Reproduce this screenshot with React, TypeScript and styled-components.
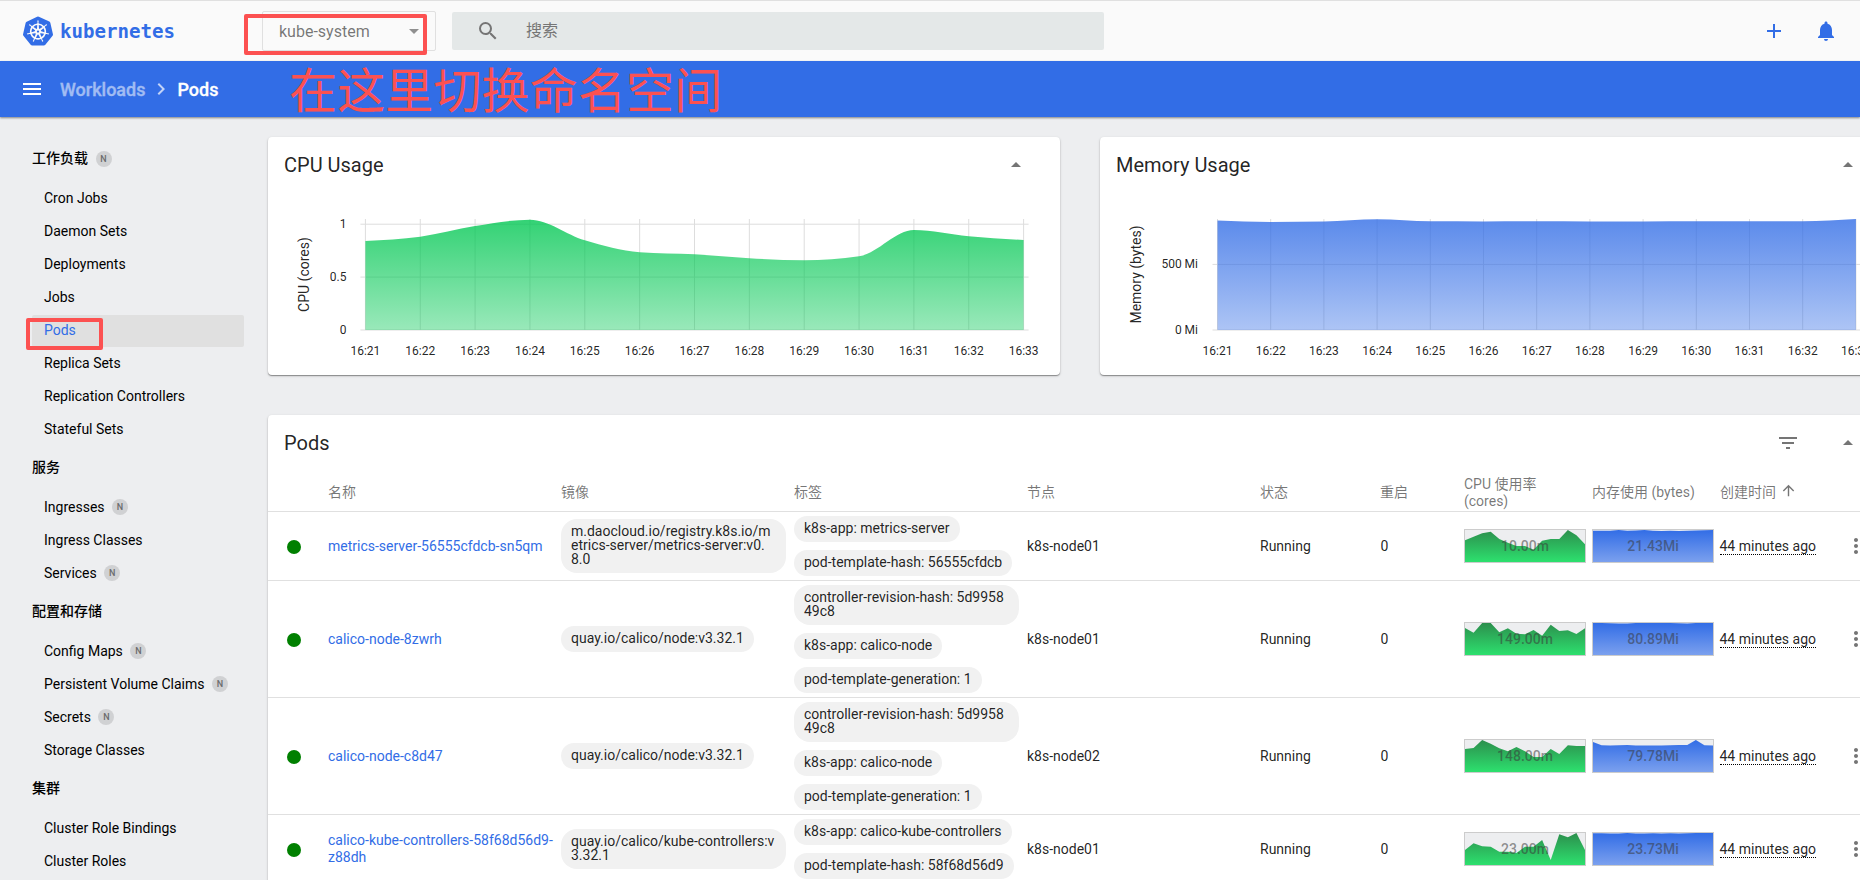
import React from "react";
import styled, { createGlobalStyle, css } from "styled-components";
import { SiKubernetes } from "react-icons/si";
import {
  MdAdd,
  MdArrowDropDown,
  MdArrowDropUp,
  MdArrowUpward,
  MdChevronRight,
  MdFilterList,
  MdMenu,
  MdMoreVert,
  MdNotifications,
  MdSearch,
} from "react-icons/md";

const BLUE = "#326de6";
const GREEN = "#00c752";
const RED = "#fc5151";
const FONT = `Roboto, "Noto Sans CJK SC", sans-serif`;

const GlobalStyle = createGlobalStyle`
  * { box-sizing: border-box; }
  html, body { margin: 0; padding: 0; }
  body {
    background: #edeef0;
    color: rgba(0, 0, 0, 0.87);
    font-family: ${FONT};
    font-size: 14px;
    overflow: hidden;
  }
`;

const Page = styled.div`
  position: relative;
  width: 1860px;
  height: 880px;
  overflow: hidden;
  display: flex;
  flex-direction: column;
`;

/* ---------- top bar ---------- */

const TopBar = styled.header`
  flex: none;
  height: 61px;
  display: flex;
  align-items: center;
  padding: 0 22px 0 23px;
  border-top: 1px solid #e0e0e0;
  background: #fafafa;
`;

const Brand = styled.a`
  display: flex;
  align-items: center;
  width: 239px;
  color: ${BLUE};
`;

const BrandName = styled.svg`
  width: 124px;
  height: 30px;
  margin-left: 7px;
  fill: ${BLUE};
  font-family: "DejaVu Sans Mono", monospace;
  font-weight: 700;
  font-size: 20px;
`;

const NamespaceSelect = styled.div`
  display: flex;
  align-items: center;
  justify-content: space-between;
  width: 174px;
  height: 40px;
  padding: 0 9px 0 16px;
  border: 1px solid #e0e0e0;
  border-radius: 2px;
  font-size: 16px;
  color: rgba(0, 0, 0, 0.54);
  > svg {
    color: #8f8f8f;
  }
`;

const SearchBox = styled.div`
  display: flex;
  align-items: center;
  width: 652px;
  height: 38px;
  margin-left: 16px;
  padding-left: 24px;
  border-radius: 2px;
  background: #e4e8e8;
  font-size: 16px;
  color: #757575;
`;

const SearchHint = styled.span`
  margin-left: 26px;
  padding-bottom: 4px;
`;

const TopActions = styled.div`
  display: flex;
  gap: 28px;
  margin-left: auto;
  color: ${BLUE};
`;

/* ---------- breadcrumb bar ---------- */

const CrumbBar = styled.nav`
  position: relative;
  z-index: 1;
  flex: none;
  height: 56px;
  display: flex;
  align-items: center;
  padding-left: 20px;
  background: ${BLUE};
  color: #fff;
  font-size: 18px;
  font-weight: 500;
  box-shadow: 0 1px 2px rgba(0, 0, 0, 0.45);
`;

const Crumb = styled.span<{ $parent?: boolean }>`
  opacity: ${(p) => (p.$parent ? 0.54 : 1)};
  margin-left: ${(p) => (p.$parent ? 16 : 4)}px;
  -webkit-text-stroke: 0.3px currentColor;
`;

const CrumbArrow = styled(MdChevronRight)`
  margin-left: 4px;
  opacity: 0.7;
`;

/* ---------- side navigation ---------- */

const Body = styled.div`
  flex: 1;
  min-height: 0;
  display: flex;
`;

const SideNav = styled.aside`
  flex: none;
  width: 268px;
  padding: 21px 24px 0 32px;
  color: #000;
`;

const NavTitle = styled.div`
  display: flex;
  align-items: center;
  height: 45px;
  padding-bottom: 4px;
  font-weight: 500;
`;

const NavTitleText = styled.span`
  padding-bottom: 3px;
`;

const NavItem = styled.div<{ $active?: boolean }>`
  display: flex;
  align-items: center;
  height: 32px;
  margin-bottom: 1px;
  padding: 0 0 2px 12px;
  border-radius: 2px;
  ${(p) =>
    p.$active &&
    css`
      background: #e0e0e0;
      color: ${BLUE};
    `}
`;

const NamespacedBadge = styled.span`
  display: flex;
  align-items: center;
  justify-content: center;
  width: 16px;
  height: 16px;
  margin-left: 7.5px;
  border-radius: 50%;
  background: #d0d1d3;
  color: #6a6b6d;
  font-size: 9px;
  font-weight: 500;
`;

/* ---------- cards ---------- */

const Main = styled.main`
  flex: none;
  width: 1624px;
  padding-top: 20px;
`;

const ChartRow = styled.div`
  display: flex;
  gap: 40px;
  margin-bottom: 40px;
`;

const Card = styled.section<{ $chart?: boolean }>`
  border-radius: 4px;
  background: #fff;
  box-shadow: 0 1px 1px rgba(0, 0, 0, 0.35), 0 1px 3px rgba(0, 0, 0, 0.16);
  ${(p) =>
    p.$chart
      ? css`
          width: 792px;
          height: 238px;
        `
      : css`
          height: 520px;
        `}
`;

const CardHead = styled.div`
  display: flex;
  align-items: center;
  height: 56px;
  padding: 0 32px 0 16px;
  font-size: 20px;
`;

const HeadIcons = styled.span`
  display: flex;
  gap: 36px;
  margin-left: auto;
  color: #757575;
`;

const Plot = styled.svg`
  display: block;
  font-family: ${FONT};
  font-size: 12px;
  fill: rgba(0, 0, 0, 0.87);
`;

/* ---------- table ---------- */

const Row = styled.div<{ $head?: boolean }>`
  display: grid;
  grid-template-columns: 60px 233px 233px 233px 233px 120px 84px 128px 128px 1fr;
  align-items: center;
  border-bottom: 1px solid #e0e0e0;
  ${(p) =>
    p.$head &&
    css`
      height: 41px;
      padding-top: 2px;
      color: rgba(0, 0, 0, 0.54);
      line-height: 17px;
    `}
`;

const Cell = styled.div`
  padding-right: 8px;
  line-height: 17px;
`;

const CountCell = styled(Cell)`
  padding-left: 0.6px;
`;

const HeadCell = styled.div<{ $narrow?: boolean }>`
  display: flex;
  align-items: center;
  gap: 4px;
  width: ${(p) => (p.$narrow ? "90px" : "auto")};
  padding-top: ${(p) => (p.$narrow ? 2 : 0)}px;
  white-space: ${(p) => (p.$narrow ? "normal" : "nowrap")};
  > svg {
    margin-bottom: 3px;
  }
`;

const ChipCell = styled(Cell)`
  display: flex;
  flex-direction: column;
  align-items: flex-start;
  gap: 8px;
  padding-top: 4px;
  padding-bottom: 4px;
`;

const Chip = styled.span`
  padding: 5px 10px 7px;
  border-radius: 16px;
  background: #f1f1f1;
  line-height: 14px;
  word-break: break-all;
`;

const PodLink = styled.a`
  color: ${BLUE};
`;

const StatusDot = styled.span`
  width: 14px;
  height: 14px;
  margin: 1px 0 0 19px;
  border-radius: 50%;
  background: #008000;
`;

const SparkBox = styled.div`
  display: grid;
  width: 122px;
  height: 34px;
  border: 1px solid #cccccc;
  background: #edeef0;
  > * {
    grid-area: 1 / 1;
  }
`;

const SparkValue = styled.span`
  place-self: center;
  z-index: 1;
  font-weight: 500;
  color: rgba(56, 56, 56, 0.54);
`;

const LastCell = styled.div`
  display: grid;
  grid-template-columns: 0 1fr;
  align-items: center;
  white-space: nowrap;
`;

const Age = styled.span`
  display: inline-block;
  line-height: 15px;
  margin-left: -0.5px;
  border-bottom: 1px dotted #000;
`;

const MoreCell = styled.div`
  padding-left: 124px;
  height: 24px;
  color: #757575;
`;

const GradientDefs = styled.svg`
  flex: none;
  width: 1px;
  height: 0;
`;

/* ---------- annotations on top of the page ---------- */

const Marker = styled.div<{ $x: number; $y: number; $w: number; $h: number }>`
  position: absolute;
  z-index: 5;
  left: ${(p) => p.$x}px;
  top: ${(p) => p.$y}px;
  width: ${(p) => p.$w}px;
  height: ${(p) => p.$h}px;
  border: 4px solid ${RED};
  border-radius: 2px;
`;

const Note = styled.div`
  position: absolute;
  z-index: 5;
  left: 289px;
  top: 58px;
  color: ${RED};
  font: 400 48px/58px "Noto Sans CJK SC", sans-serif;
  letter-spacing: 0.15px;
  white-space: nowrap;
`;

/* ---------- charts ---------- */

type Point = [number, number];

/** Monotone cubic interpolation along x. */
function smoothLine(pts: Point[]): string {
  const n = pts.length;
  const slope = (i: number) => (pts[i + 1][1] - pts[i][1]) / (pts[i + 1][0] - pts[i][0]);
  const m: number[] = new Array(n).fill(0);
  for (let i = 1; i < n - 1; i++) {
    const a = slope(i - 1);
    const b = slope(i);
    m[i] = (Math.sign(a) + Math.sign(b)) * Math.min(Math.abs(a), Math.abs(b), Math.abs(a + b) / 4);
  }
  m[0] = (3 * slope(0) - m[1]) / 2;
  m[n - 1] = (3 * slope(n - 2) - m[n - 2]) / 2;
  let d = `M${pts[0][0]},${pts[0][1]}`;
  for (let i = 1; i < n; i++) {
    const [x0, y0] = pts[i - 1];
    const [x1, y1] = pts[i];
    const k = (x1 - x0) / 3;
    d += `C${x0 + k},${y0 + k * m[i - 1]} ${x1 - k},${y1 - k * m[i]} ${x1},${y1}`;
  }
  return d;
}

interface UsageProps {
  id: string;
  title: string;
  axis: string;
  axisX: number;
  color: string;
  left: number;
  step: number;
  tickX: number;
  ticks: { label: string; y: number }[];
  tops: number[];
}

function UsageCard({ id, title, axis, axisX, color, left, step, tickX, ticks, tops }: UsageProps) {
  const base = 137;
  const pts: Point[] = tops.map((y, i) => [left + i * step, y]);
  const right = left + 12 * step;
  return (
    <Card $chart>
      <CardHead>
        {title}
        <HeadIcons>
          <MdArrowDropUp size={24} />
        </HeadIcons>
      </CardHead>
      <Plot width={792} height={182}>
        <defs>
          <linearGradient id={id} x1="0" y1="0" x2="0" y2="1">
            <stop offset="0" stopColor={color} stopOpacity="0.8" />
            <stop offset="1" stopColor={color} stopOpacity="0.4" />
          </linearGradient>
        </defs>
        {pts.map(([x], i) => (
          <g key={i}>
            <line x1={x} x2={x} y1={26} y2={base} stroke="#ddd" />
            <text x={x} y={162} textAnchor="middle">{`16:${21 + i}`}</text>
          </g>
        ))}
        {ticks.map((t) => (
          <g key={t.label}>
            <line x1={left - 5} x2={right + 5} y1={t.y} y2={t.y} stroke="#ddd" />
            <text x={tickX} y={t.y + 4} textAnchor="end">
              {t.label}
            </text>
          </g>
        ))}
        <path d={`${smoothLine(pts)}V${base}H${left}Z`} fill={`url(#${id})`} />
        <text fontSize={14} textAnchor="middle" transform={`translate(${axisX},81.5) rotate(-90)`}>
          {axis}
        </text>
      </Plot>
    </Card>
  );
}

function Spark({ values, text, kind }: { values: number[]; text: string; kind: "cpu" | "mem" }) {
  const line = values.map((v, i) => `${((i * 120) / (values.length - 1)).toFixed(2)},${v}`).join(" ");
  return (
    <SparkBox>
      <svg width={120} height={32}>
        <polygon points={`0,32 ${line} 120,32`} fill={`url(#spark-${kind})`} />
      </svg>
      <SparkValue>{text}</SparkValue>
    </SparkBox>
  );
}

/** Shared fills of the small table charts. */
function SparkGradients() {
  return (
    <GradientDefs>
      <defs>
        <linearGradient id="spark-cpu" gradientUnits="userSpaceOnUse" x1="0" y1="0" x2="0" y2="32">
          <stop offset="0" stopColor="#2c8f4d" />
          <stop offset="1" stopColor="#2de06e" />
        </linearGradient>
        <linearGradient id="spark-mem" gradientUnits="userSpaceOnUse" x1="0" y1="0" x2="0" y2="32">
          <stop offset="0" stopColor="#326de6" />
          <stop offset="1" stopColor="#7ba0ee" />
        </linearGradient>
      </defs>
    </GradientDefs>
  );
}

/* ---------- data ---------- */

const nav = [
  {
    title: "工作负载",
    badge: true,
    items: ["Cron Jobs", "Daemon Sets", "Deployments", "Jobs", "Pods", "Replica Sets", "Replication Controllers", "Stateful Sets"],
  },
  { title: "服务", items: ["Ingresses", "Ingress Classes", "Services"] },
  { title: "配置和存储", items: ["Config Maps", "Persistent Volume Claims", "Secrets", "Storage Classes"] },
  { title: "集群", items: ["Cluster Role Bindings", "Cluster Roles"] },
];

const namespaced = new Set(["Ingresses", "Services", "Config Maps", "Persistent Volume Claims", "Secrets"]);

const pods = [
  {
    name: "metrics-server-56555cfdcb-sn5qm",
    image: "m.daocloud.io/registry.k8s.io/metrics-server/metrics-server:v0.8.0",
    labels: ["k8s-app: metrics-server", "pod-template-hash: 56555cfdcb"],
    node: "k8s-node01",
    cpu: "10.00m",
    cpuLine: [10.3, 6.7, 3.3, 1.7, 9, 12.7, 16, 16, 19.7, 10.7, 9, 9, 0, 5.3, 14.3],
    mem: "21.43Mi",
    memLine: [0.8, 0.7, 0.8, 0, 0.8, 0.5, 0, 0.8, 1, 0.7, 0.9, 0.7, 0.6, 0.2, 0.1],
  },
  {
    name: "calico-node-8zwrh",
    image: "quay.io/calico/node:v3.32.1",
    labels: ["controller-revision-hash: 5d995849c8", "k8s-app: calico-node", "pod-template-generation: 1"],
    node: "k8s-node01",
    cpu: "149.00m",
    cpuLine: [5, 9.7, 0, 0, 9.3, 5.3, 10.7, 11.3, 7, 12.7, 1.7, 8, 7.3, 11, 5.3],
    mem: "80.89Mi",
    memLine: [0, 0, 0.3, 0.6, 0.4, 0, 0, 0, 0, 0, 0.3, 0.5, 0.1, 0, 0],
  },
  {
    name: "calico-node-c8d47",
    image: "quay.io/calico/node:v3.32.1",
    labels: ["controller-revision-hash: 5d995849c8", "k8s-app: calico-node", "pod-template-generation: 1"],
    node: "k8s-node02",
    cpu: "148.00m",
    cpuLine: [9, 8, 0, 3.7, 8.3, 11.3, 7, 11.3, 17, 17, 9, 14, 5.3, 6, 6],
    mem: "79.78Mi",
    memLine: [2, 5.3, 5.4, 5.3, 5.1, 5.4, 5.4, 5.4, 5.4, 5.2, 5, 5, 0, 5.3, 5.4],
  },
  {
    name: "calico-kube-controllers-58f68d56d9-z88dh",
    image: "quay.io/calico/kube-controllers:v3.32.1",
    labels: ["k8s-app: calico-kube-controllers", "pod-template-hash: 58f68d56d9"],
    node: "k8s-node01",
    cpu: "23.00m",
    cpuLine: [17, 10.3, 13.3, 13.7, 18.7, 18.7, 20, 13.7, 13.7, 7, 27, 1.3, 4.3, 0, 17],
    mem: "23.73Mi",
    memLine: [0.3, 0.3, 0.6, 0.6, 0, 0.4, 0.4, 0.3, 0.6, 0.3, 0.6, 0.2, 0.1, 0, 0],
  },
];

export default function App() {
  return (
    <Page>
      <GlobalStyle />
      <TopBar>
        <Brand>
          <SiKubernetes size={30} />
          <BrandName>
            <text x="0" y="22" textLength="115" lengthAdjust="spacingAndGlyphs">
              kubernetes
            </text>
          </BrandName>
        </Brand>
        <NamespaceSelect>
          kube-system
          <MdArrowDropDown size={24} />
        </NamespaceSelect>
        <SearchBox>
          <MdSearch size={24} />
          <SearchHint>搜索</SearchHint>
        </SearchBox>
        <TopActions>
          <MdAdd size={24} />
          <MdNotifications size={24} />
        </TopActions>
      </TopBar>

      <CrumbBar>
        <MdMenu size={24} />
        <Crumb $parent>Workloads</Crumb>
        <CrumbArrow size={24} />
        <Crumb>Pods</Crumb>
      </CrumbBar>

      <Body>
        <SideNav>
          {nav.map((group) => (
            <React.Fragment key={group.title}>
              <NavTitle>
                <NavTitleText>{group.title}</NavTitleText>
                {group.badge && <NamespacedBadge>N</NamespacedBadge>}
              </NavTitle>
              {group.items.map((item) => (
                <NavItem key={item} $active={item === "Pods"}>
                  {item}
                  {namespaced.has(item) && <NamespacedBadge>N</NamespacedBadge>}
                </NavItem>
              ))}
            </React.Fragment>
          ))}
        </SideNav>

        <Main>
          <ChartRow>
            <UsageCard
              id="cpu"
              title="CPU Usage"
              axis="CPU (cores)"
              axisX={41}
              color={GREEN}
              left={97.4}
              step={54.85}
              tickX={78.5}
              ticks={[
                { label: "1", y: 31.2 },
                { label: "0.5", y: 84.1 },
                { label: "0", y: 137 },
              ]}
              tops={[48, 43.7, 33, 26.7, 47.3, 59.3, 61.3, 65.3, 67.2, 63.3, 37, 43.3, 47]}
            />
            <UsageCard
              id="memory"
              title="Memory Usage"
              axis="Memory (bytes)"
              axisX={41}
              color={BLUE}
              left={117.5}
              step={53.2}
              tickX={98}
              ticks={[
                { label: "500 Mi", y: 71.4 },
                { label: "0 Mi", y: 137 },
              ]}
              tops={[27.5, 28.9, 28.5, 26.2, 28.3, 28.4, 28.2, 28.4, 28.4, 28.3, 28.3, 28.2, 26]}
            />
          </ChartRow>

          <Card>
            <CardHead>
              Pods
              <HeadIcons>
                <MdFilterList size={24} />
                <MdArrowDropUp size={24} />
              </HeadIcons>
            </CardHead>
            <Row $head>
              <span />
              <HeadCell>名称</HeadCell>
              <HeadCell>镜像</HeadCell>
              <HeadCell>标签</HeadCell>
              <HeadCell>节点</HeadCell>
              <HeadCell>状态</HeadCell>
              <HeadCell>重启</HeadCell>
              <HeadCell $narrow>CPU 使用率 (cores)</HeadCell>
              <HeadCell>内存使用 (bytes)</HeadCell>
              <HeadCell>
                创建时间
                <MdArrowUpward size={17} />
              </HeadCell>
            </Row>
            {pods.map((pod) => (
              <Row key={pod.name}>
                <StatusDot />
                <Cell>
                  <PodLink>{pod.name}</PodLink>
                </Cell>
                <ChipCell>
                  <Chip>{pod.image}</Chip>
                </ChipCell>
                <ChipCell>
                  {pod.labels.map((label) => (
                    <Chip key={label}>{label}</Chip>
                  ))}
                </ChipCell>
                <Cell>{pod.node}</Cell>
                <Cell>Running</Cell>
                <CountCell>0</CountCell>
                <Spark values={pod.cpuLine} text={pod.cpu} kind="cpu" />
                <Spark values={pod.memLine} text={pod.mem} kind="mem" />
                <LastCell>
                  <div>
                    <Age>44 minutes ago</Age>
                  </div>
                  <MoreCell>
                    <MdMoreVert size={24} />
                  </MoreCell>
                </LastCell>
              </Row>
            ))}
          </Card>
        </Main>
      </Body>

      <SparkGradients />
      <Marker $x={244} $y={14} $w={183} $h={41} />
      <Marker $x={26} $y={318} $w={77} $h={32} />
      <Note>在这里切换命名空间</Note>
    </Page>
  );
}
